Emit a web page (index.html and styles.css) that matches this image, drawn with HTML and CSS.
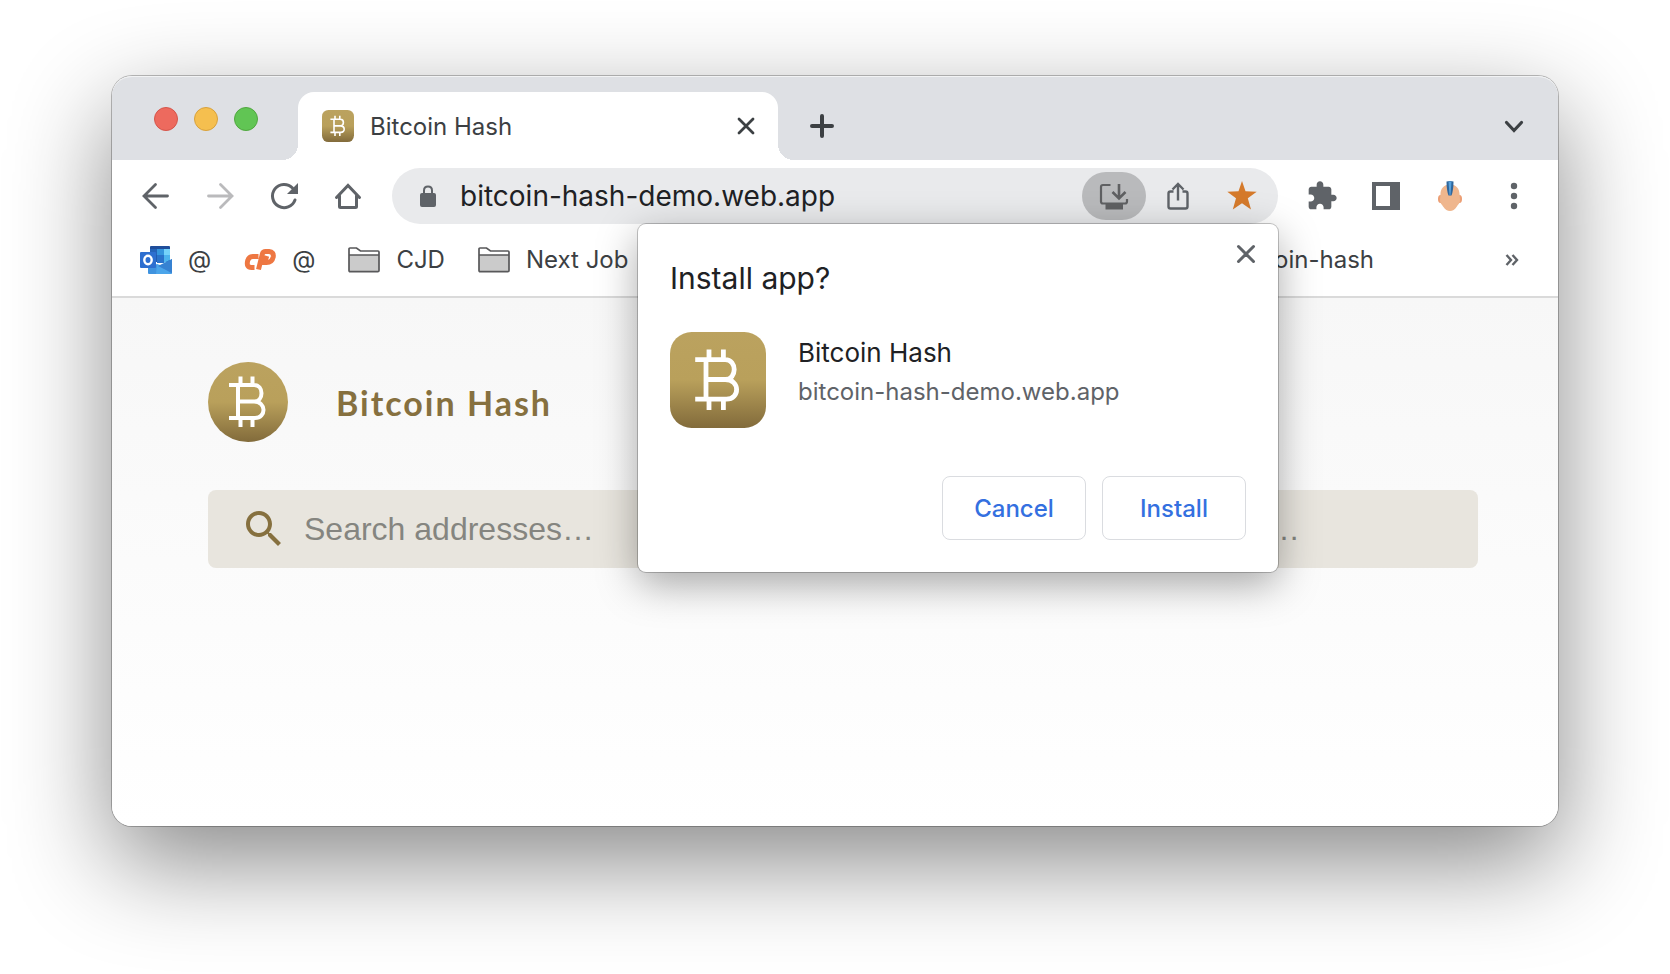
FILE: index.html
```html
<!DOCTYPE html>
<html lang="en">
<head>
<meta charset="utf-8">
<title>Bitcoin Hash</title>
<link rel="stylesheet" href="styles.css">
</head>
<body>
<svg class="defs" aria-hidden="true">
  <defs>
    <linearGradient id="gold" x1="0" y1="0" x2="0" y2="1">
      <stop offset="0" stop-color="#bba25f"/>
      <stop offset=".5" stop-color="#b9a05b"/>
      <stop offset="1" stop-color="#826b3b"/>
    </linearGradient>
    <symbol id="bitcoin" viewBox="0 0 80 80">
      <path d="M21 23H46C56 23 56 39.6 46 39.6H30M46 39.6C58.500 39.600 58.500 56 47 56H21M30 23V56M32.500 14.500V23M44.500 14.500V23M32.500 56V65M44.500 56V65" fill="none" stroke="#fff" stroke-width="4"/>
    </symbol>
    <symbol id="folder" viewBox="0 0 32 26">
      <path d="M1 8H31V23.500Q31 25 29.500 25H2.500Q1 25 1 23.500Z" fill="#cbcbcb"/>
      <path d="M1 5V2Q1 1 2 1H8.500L12.500 4H30Q31 4 31 5V23.500Q31 24.700 29.800 24.700H2.200Q1 24.700 1 23.500V5M1 8H31" fill="none" stroke="#58585a" stroke-width="1.700"/>
    </symbol>
  </defs>
</svg>

<main class="window">
  <header class="tabstrip">
    <div class="lights">
      <button class="light light-close" aria-label="Close window"></button>
      <button class="light light-min" aria-label="Minimize window"></button>
      <button class="light light-max" aria-label="Zoom window"></button>
    </div>
    <div class="tab">
      <svg class="favicon" viewBox="0 0 80 80" aria-hidden="true"><rect width="80" height="80" rx="16" fill="url(#gold)"/><use href="#bitcoin"/></svg>
      <span class="tab-title">Bitcoin Hash</span>
      <button class="icon-btn tab-close" aria-label="Close tab"><svg class="i32" viewBox="0 0 32 32"><path d="M9 9L23 23M23 9L9 23" fill="none" stroke="#3c4043" stroke-width="2.800" stroke-linecap="round"/></svg></button>
    </div>
    <button class="icon-btn new-tab" aria-label="New tab"><svg class="i32" viewBox="0 0 32 32"><path d="M6 16H26M16 6V26" fill="none" stroke="#3c4043" stroke-width="4" stroke-linecap="round"/></svg></button>
    <button class="icon-btn tab-search" aria-label="Search tabs"><svg class="i32" viewBox="0 0 32 32"><path d="M8.500 12.500L16 20.500L23.500 12.500" fill="none" stroke="#3c4043" stroke-width="3.200" stroke-linecap="round"/></svg></button>
  </header>

  <div class="toolbar">
    <nav class="tools" aria-label="Navigation">
      <button class="icon-btn" aria-label="Back"><svg class="i32" viewBox="0 0 32 32"><path d="M27.500 16H5M15.500 4.500L4 16L15.500 27.500" fill="none" stroke="#5f6368" stroke-width="2.800" stroke-linecap="round"/></svg></button>
      <button class="icon-btn" aria-label="Forward"><svg class="i32" viewBox="0 0 32 32"><path d="M4.500 16H27M16.500 4.500L28 16L16.500 27.500" fill="none" stroke="#bababc" stroke-width="2.800" stroke-linecap="round"/></svg></button>
      <button class="icon-btn" aria-label="Reload"><svg class="i32" viewBox="0 0 32 32"><path d="M27 20A11.600 11.600 0 1 1 24.500 8" fill="none" stroke="#5f6368" stroke-width="3" stroke-linecap="round"/><path d="M30 3V14H19Z" fill="#5f6368"/></svg></button>
      <button class="icon-btn" aria-label="Home"><svg class="i32" viewBox="0 0 32 32"><path d="M4.500 17.500L16 5.500L27.500 17.500M7.500 15.500V26.500Q7.500 27.500 8.500 27.500H23.500Q24.500 27.500 24.500 26.500V15.500" fill="none" stroke="#5f6368" stroke-width="3" stroke-linecap="round"/></svg></button>
    </nav>

    <div class="omnibox">
      <svg class="i32 lock" viewBox="0 0 32 32" aria-hidden="true"><rect x="8" y="13" width="16" height="14" rx="2" fill="#5f6368"/><path d="M12 14V10.500C12 5.300 20 5.300 20 10.500V14" fill="none" stroke="#5f6368" stroke-width="2"/></svg>
      <input class="url" type="text" aria-label="Address" value="bitcoin-hash-demo.web.app">
      <button class="icon-btn chip" aria-label="Install app"><svg class="i32" viewBox="0 0 32 32"><path d="M12.500 5H5Q3 5 3 7V21.500Q3 23.500 5 23.500H27Q29 23.500 29 21.500V19" fill="none" stroke="#5f6062" stroke-width="2.200"/><path d="M7.500 24H25V29.500H7.500Z" fill="#5f6062"/><path d="M21 4V18M14.500 12L21 18.500L27.500 12" fill="none" stroke="#5f6062" stroke-width="2.600"/></svg></button>
      <button class="icon-btn" aria-label="Share"><svg class="i32" viewBox="0 0 32 32"><path d="M11.500 11.500H8.500Q6.500 11.500 6.500 13.500V26.500Q6.500 28.500 8.500 28.500H23.500Q25.500 28.500 25.500 26.500V13.500Q25.500 11.500 23.500 11.500H20.500M16 20.500V4.500M10.500 9.500L16 4L21.500 9.500" fill="none" stroke="#5f6368" stroke-width="2.400"/></svg></button>
      <button class="icon-btn" aria-label="Edit bookmark"><svg class="i32" viewBox="0 0 32 32"><path d="M16 1L19.500 11.300L30.700 11.700L21.800 18.300L25 29.500L16 23.300L6.800 29.500L10 18.300L1.300 11.700L12.500 11.300Z" fill="#d57a2b"/></svg></button>

      <section class="dialog" role="dialog" aria-labelledby="install-title">
        <button class="icon-btn dialog-close" aria-label="Close"><svg class="i32" viewBox="0 0 32 32"><path d="M8.500 8.500L23.500 23.500M23.500 8.500L8.500 23.500" fill="none" stroke="#5f6368" stroke-width="3" stroke-linecap="round"/></svg></button>
        <h2 class="dialog-title" id="install-title">Install app?</h2>
        <div class="app">
          <svg class="app-icon" viewBox="0 0 80 80" aria-hidden="true"><rect width="80" height="80" rx="18" fill="url(#gold)"/><use href="#bitcoin"/></svg>
          <div>
            <p class="app-name">Bitcoin Hash</p>
            <p class="app-origin">bitcoin-hash-demo.web.app</p>
          </div>
        </div>
        <div class="actions">
          <button class="btn">Cancel</button>
          <button class="btn">Install</button>
        </div>
      </section>
    </div>

    <div class="tools">
      <button class="icon-btn" aria-label="Extensions"><svg class="i32" viewBox="0 0 24 24"><path d="M20.500 11H19V7c0-1.100-.9-2-2-2h-4V3.500C13 2.120 11.880 1 10.500 1S8 2.120 8 3.500V5H4c-1.100 0-1.990.9-1.990 2v3.800H3.500c1.490 0 2.700 1.210 2.700 2.700s-1.210 2.700-2.700 2.700H2V20c0 1.100.9 2 2 2h3.800v-1.500c0-1.490 1.210-2.700 2.700-2.700s2.700 1.210 2.700 2.700V22H17c1.100 0 2-.9 2-2v-4h1.500c1.380 0 2.500-1.120 2.500-2.500S21.880 11 20.500 11z" fill="#5f6368"/></svg></button>
      <button class="icon-btn" aria-label="Side panel"><svg class="i32" viewBox="0 0 32 32"><path d="M2 2H30V30H2ZM6 6V26H20V6Z" fill="#5f6368" fill-rule="evenodd"/></svg></button>
      <button class="icon-btn" aria-label="Profile"><svg class="i32" viewBox="0 0 32 32"><ellipse cx="6.500" cy="19" rx="2.500" ry="4" fill="#ec9f75"/><ellipse cx="25.500" cy="19" rx="2.500" ry="4" fill="#ec9f75"/><path d="M16 4.500C9.500 4.500 6.500 9 6.500 14L6 20C6 23.500 8 24.500 9.500 27Q12 31 16 31Q20 31 22.500 27C24 24.500 26 23.500 26 20L25.500 14C25.500 9 22.500 4.500 16 4.500Z" fill="#efb68d"/><path d="M12.500 1.500Q16 .6 19.500 1.500Q19.500 10 17.500 15.500H14.500Q12.500 10 12.500 1.500Z" fill="#2f669c"/><path d="M14.500 1.500H17.500L16.500 15H15.500Z" fill="#58a2dc"/></svg></button>
      <button class="icon-btn" aria-label="Menu"><svg class="i32" viewBox="0 0 32 32"><g fill="#5f6368"><circle cx="16" cy="6" r="3.200"/><circle cx="16" cy="16" r="3.200"/><circle cx="16" cy="26" r="3.200"/></g></svg></button>
    </div>
  </div>

  <nav class="bookmarks" aria-label="Bookmarks">
    <a class="bookmark" href="#"><svg class="bookmark-icon" viewBox="0 0 32 28" aria-hidden="true"><path d="M10 1Q10 0 11 0H29Q30 0 30 1V16H10Z" fill="#1f4e9b"/><path d="M10 3H17V9H10Z" fill="#2463b8"/><path d="M17 3H24V9H17Z" fill="#3595dd"/><path d="M24 3H30V9H24Z" fill="#75d3fa"/><path d="M10 9H17V16H10Z" fill="#215baf"/><path d="M17 9H24V17H17Z" fill="#2a73cb"/><path d="M24 9H30V14L24 17Z" fill="#4db4ee"/><path d="M8 14L20 20L32 13V27Q32 28 31 28H9Q8 28 8 27Z" fill="#3f93df"/><path d="M17 18L20 19L32 28H16Z" fill="#4ba5ea"/><path d="M18 20L32 13V27Z" fill="#3682d2"/><rect x="0" y="6" width="16" height="16" rx="1" fill="#2d6fd0"/><ellipse cx="8" cy="14" rx="3.700" ry="4.200" fill="none" stroke="#fff" stroke-width="2.400"/></svg><span>@</span></a>
    <a class="bookmark" href="#"><svg class="bookmark-icon" viewBox="0 0 32 24" aria-hidden="true"><path d="M14.500 8.500H8.800Q5 8.500 3.700 12.500Q2 19.500 7.500 19.500H10.500M14.500 21.500L18.500 5.500Q19.200 3.500 21.500 3.500H25Q30 4 29.200 9Q28 14.500 22.500 14.500H20.500L22.800 8" fill="none" stroke="#ee7742" stroke-width="5"/></svg><span>@</span></a>
    <a class="bookmark" href="#"><svg class="bookmark-icon" aria-hidden="true"><use href="#folder"/></svg><span>CJD</span></a>
    <a class="bookmark" href="#"><svg class="bookmark-icon" aria-hidden="true"><use href="#folder"/></svg><span>Next Job</span></a>
    <a class="bookmark bookmark-last" href="#">bitcoin-hash</a>
    <button class="icon-btn more" aria-label="More bookmarks"><svg class="i32" viewBox="0 0 32 32"><path d="M8.500 11L13 16L8.500 21M14.500 11L19 16L14.500 21" fill="none" stroke="#5f6368" stroke-width="2.400"/></svg></button>
  </nav>

  <div class="page">
    <div class="brand">
      <svg class="logo" viewBox="0 0 80 80" aria-hidden="true"><circle cx="40" cy="40" r="40" fill="url(#gold)"/><use href="#bitcoin"/></svg>
      <h1 class="brand-name">Bitcoin Hash</h1>
    </div>
    <form class="search">
      <svg class="search-icon" viewBox="0 0 24 24" aria-hidden="true"><path d="M15.500 14h-.79l-.28-.27C15.410 12.590 16 11.110 16 9.500 16 5.910 13.090 3 9.500 3S3 5.910 3 9.500 5.910 16 9.500 16c1.610 0 3.090-.59 4.230-1.570l.27.28v.79l5 4.990L20.490 19l-4.990-5zm-6 0C7.010 14 5 11.990 5 9.500S7.010 5 9.500 5 14 7.010 14 9.500 11.990 14 9.500 14z" fill="#86703f"/></svg>
      <input class="search-input" type="text" aria-label="Search addresses" placeholder="Search addresses…">
      <input class="search-input search-second" type="text" aria-label="Search" placeholder="…">
    </form>
  </div>
</main>
</body>
</html>
```
FILE: styles.css
```css
* { box-sizing: border-box; }

body {
  margin: 0;
  min-height: 100vh;
  padding: 76px 112px 148px;
  display: flex;
  background: #fff;
  color: #3c4043;
  font-family: Inter, Roboto, "Liberation Sans", sans-serif;
  font-size: 24px;
}

h1, h2, p { margin: 0; }

button, input {
  border: 0;
  padding: 0;
  background: none;
  font: inherit;
  color: inherit;
}

svg { display: block; flex: none; }

.defs { position: absolute; width: 0; height: 0; }

.i32 { width: 32px; height: 32px; }

.icon-btn {
  flex: none;
  width: 64px;
  height: 48px;
  display: flex;
  align-items: center;
  justify-content: center;
}

.window {
  flex: 1;
  min-width: 0;
  display: flex;
  flex-direction: column;
  border-radius: 20px;
  background: #fff;
  box-shadow: 0 0 0 1px rgba(0, 0, 0, .25), 0 36px 100px rgba(0, 0, 0, .47);
}

/* Tab strip */
.tabstrip {
  height: 84px;
  padding: 0 12px 0 42px;
  display: flex;
  align-items: flex-end;
  border-radius: 20px 20px 0 0;
  background: #dee0e4;
  box-shadow: inset 0 2px 0 -1px #f2f3f4;
}

.lights {
  display: flex;
  gap: 16px;
  padding-bottom: 29px;
  margin-right: 32px;
}

.light {
  width: 24px;
  height: 24px;
  border-radius: 50%;
  border: 1px solid;
}

.light-close { background: #ed6a5e; border-color: #d5554a; }
.light-min { background: #f5bf4f; border-color: #d8a13c; }
.light-max { background: #61c554; border-color: #50a73f; }

.tab {
  position: relative;
  width: 480px;
  height: 68px;
  margin-left: 8px;
  padding-left: 24px;
  display: flex;
  align-items: center;
  border-radius: 16px 16px 0 0;
  background: #fff;
}

.tab::before, .tab::after {
  content: "";
  position: absolute;
  bottom: 0;
  width: 16px;
  height: 16px;
}

.tab::before {
  right: 100%;
  background: radial-gradient(circle at 0 0, transparent 16px, #fff 16px);
}

.tab::after {
  left: 100%;
  background: radial-gradient(circle at 100% 0, transparent 16px, #fff 16px);
}

.favicon { width: 32px; height: 32px; margin-right: 16px; }
.tab-title { flex: 1; }
.new-tab { margin: 0 auto 10px 12px; }
.tab-search { margin-bottom: 10px; }

/* Toolbar */
.toolbar {
  height: 72px;
  padding: 0 12px;
  display: flex;
  align-items: center;
  gap: 12px;
}

.tools { display: flex; }

.omnibox {
  position: relative;
  flex: 1;
  min-width: 0;
  height: 56px;
  padding: 0 4px 0 20px;
  display: flex;
  align-items: center;
  border-radius: 28px;
  background: #e9eaec;
}

.lock { margin-right: 16px; }

.url {
  flex: 1;
  min-width: 0;
  height: 48px;
  font-size: 28px;
  color: #202124;
}

.chip { border-radius: 24px; background: #b9babc; }

/* Install dialog */
.dialog {
  position: absolute;
  z-index: 2;
  top: 100%;
  right: 0;
  width: 640px;
  padding: 32px;
  border-radius: 8px;
  background: #fff;
  color: #202124;
  box-shadow: 0 0 0 1px rgba(0, 0, 0, .22), 0 12px 40px rgba(0, 0, 0, .34);
}

.dialog-close { position: absolute; top: 6px; right: 0; }

.dialog-title {
  font-size: 30px;
  font-weight: 400;
  line-height: 44px;
  margin-bottom: 32px;
}

.app { display: flex; gap: 32px; margin-bottom: 48px; }
.app-icon { width: 96px; height: 96px; }
.app-name { font-size: 26px; line-height: 42px; }
.app-origin { line-height: 36px; color: #5f6368; }

.actions { display: flex; justify-content: flex-end; gap: 16px; }

.btn {
  width: 144px;
  height: 64px;
  border: 1px solid #dadce0;
  border-radius: 8px;
  color: #3470e0;
  font-weight: 500;
}

/* Bookmarks bar */
.bookmarks {
  height: 66px;
  padding: 0 12px 9px 28px;
  display: flex;
  align-items: center;
  gap: 33px;
  border-bottom: 2px solid #dadada;
}

.bookmark {
  display: flex;
  align-items: center;
  gap: 16px;
  color: inherit;
  text-decoration: none;
  white-space: nowrap;
}

.bookmark-icon { width: 32px; height: 28px; }
.bookmark-last { margin-left: auto; margin-right: 75px; }

/* Page */
.page {
  flex: 1;
  padding: 64px 80px 64px 96px;
  border-radius: 0 0 20px 20px;
  background: linear-gradient(#f7f7f7, #fff);
}

.brand { display: flex; align-items: center; gap: 48px; margin-bottom: 48px; }
.logo { width: 80px; height: 80px; }

.brand-name {
  font-family: Lato, "Open Sans", sans-serif;
  font-size: 34px;
  font-weight: 700;
  letter-spacing: 2px;
  color: #86703f;
}

.search {
  height: 78px;
  padding: 0 32px;
  display: flex;
  align-items: center;
  gap: 16px;
  border-radius: 8px;
  background: #e8e5de;
}

.search-icon { width: 48px; height: 48px; }

.search-input {
  flex: 1;
  min-width: 0;
  height: 48px;
  font-family: "Liberation Sans", Arial, sans-serif;
  font-size: 32px;
}

.search-second { flex: none; width: 178px; }
.search-input::placeholder { color: #858580; opacity: 1; }
```
